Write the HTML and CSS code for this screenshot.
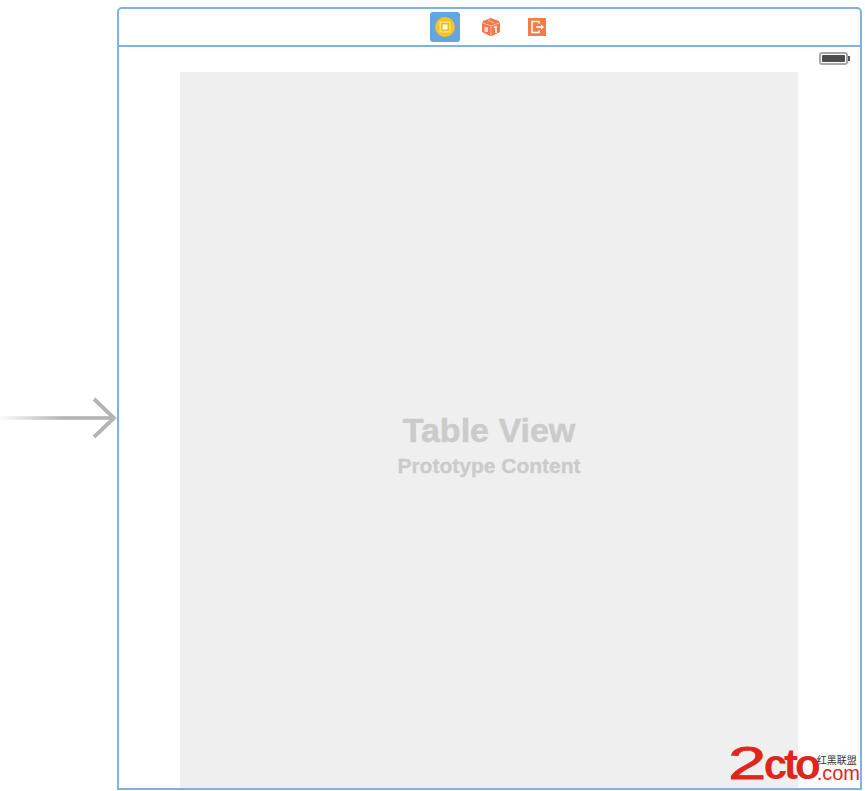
FILE: index.html
```html
<!DOCTYPE html>
<html lang="en">
<head>
    <meta charset="UTF-8">
    <title>Table View Controller Scene</title>
    <link rel="stylesheet" href="styles.css">
</head>
<body>
    <div class="canvas">
        <svg class="entry-arrow" width="117" height="50" viewBox="0 0 117 50">
            <defs>
                <linearGradient id="arrowFade" x1="0" y1="0" x2="1" y2="0">
                    <stop offset="0" stop-color="#b4b4b4" stop-opacity="0.05"/>
                    <stop offset="0.55" stop-color="#b4b4b4"/>
                    <stop offset="1" stop-color="#b4b4b4"/>
                </linearGradient>
            </defs>
            <rect x="0" y="23.2" width="114" height="3.6" fill="url(#arrowFade)"/>
            <path d="M94 6 L114 25 L94 44" fill="none" stroke="#b4b4b4" stroke-width="3.8"/>
        </svg>

        <div class="scene">
            <header class="scene-bar">
                <span class="bar-icon selected">
                    <svg width="22" height="22" viewBox="0 0 22 22">
                        <circle cx="11" cy="11" r="10" fill="#f8c31c"/>
                        <rect x="5.5" y="5.5" width="11" height="11" fill="#fbe08a"/>
                        <rect x="7" y="7" width="8" height="8" fill="#f6b90f"/>
                        <rect x="8.5" y="8.5" width="5" height="5" fill="#ffffff"/>
                    </svg>
                </span>
                <span class="bar-icon">
                    <svg width="20" height="20" viewBox="0 0 20 20">
                        <path d="M10 1 L18 4 L19 7 L19 15 L11 19 L9 19 L1 15 L1 7 L2 4 Z" fill="#f4774a"/>
                        <path d="M2 6 L10 9 L18 6 M10 9 L10 19" fill="none" stroke="#fbd5c5" stroke-width="0.8"/>
                        <path d="M7 3 L13 6" stroke="#fbd5c5" stroke-width="0.8"/>
                        <rect x="3.5" y="10" width="3.5" height="5" fill="#fbd5c5"/>
                        <path d="M13 10.5 L15 9.8 L15 16" fill="none" stroke="#ffffff" stroke-width="1.5"/>
                    </svg>
                </span>
                <span class="bar-icon">
                    <svg width="20" height="20" viewBox="0 0 20 20">
                        <rect x="1" y="1" width="18" height="18" fill="#f47c46"/>
                        <path d="M12 6.5 V4.5 H5 V15.5 H12 V13.5" fill="none" stroke="#ffffff" stroke-width="1.6"/>
                        <path d="M9 10 H14" stroke="#ffffff" stroke-width="1.6"/>
                        <path d="M14 7.5 L17 10 L14 12.5 Z" fill="#ffffff"/>
                    </svg>
                </span>
            </header>

            <div class="status-row">
                <span class="battery"><span class="battery-level"></span></span>
            </div>

            <main class="table-view">
                <h1>Table View</h1>
                <h2>Prototype Content</h2>
            </main>

            <div class="watermark">
                <span class="logo-two">2</span><span class="logo-cto">cto</span>
                <span class="logo-side">
                    <span class="logo-cn">红黑联盟</span>
                    <span class="logo-com">.com</span>
                </span>
            </div>
        </div>
    </div>
</body>
</html>
```

FILE: styles.css
```css
body {
    margin: 0;
    background: #ffffff;
    font-family: "Liberation Sans", Arial, sans-serif;
}

.canvas {
    display: flex;
    align-items: flex-start;
    width: 865px;
    height: 791px;
    overflow: hidden;
}

.entry-arrow {
    flex: none;
    margin-top: 393px;
}

.scene {
    position: relative;
    box-sizing: border-box;
    display: flex;
    flex-direction: column;
    width: 745px;
    height: 783px;
    margin-top: 7px;
    border: 2px solid #7fb1e3;
    border-radius: 5px 5px 0 0;
}

.scene-bar {
    flex: none;
    display: flex;
    justify-content: center;
    align-items: center;
    gap: 16px;
    height: 36px;
    padding-left: 2px;
    border-bottom: 2px solid #7fb1e3;
}

.bar-icon {
    display: flex;
    justify-content: center;
    align-items: center;
    width: 30px;
    height: 30px;
    border-radius: 3px;
}

.bar-icon.selected {
    background: #63a5e0;
}

.status-row {
    flex: none;
    display: flex;
    justify-content: flex-end;
    height: 25px;
    padding: 5px 12px 0 0;
    box-sizing: border-box;
}

.battery {
    position: relative;
    box-sizing: border-box;
    display: block;
    width: 29px;
    height: 13px;
    padding: 1px;
    border: 2px solid #a8a8a8;
    border-radius: 3px;
}

.battery::after {
    content: "";
    position: absolute;
    right: -4px;
    top: 2px;
    width: 2px;
    height: 5px;
    background: #555555;
}

.battery-level {
    display: block;
    height: 100%;
    background: #4d4d4d;
    border-radius: 1px;
}

.table-view {
    flex: 1;
    margin: 0 62px 0 61px;
    padding-top: 338px;
    background: #efefef;
    text-align: center;
    color: #cbcbcb;
}

.table-view h1 {
    margin: 0;
    font-size: 34px;
    line-height: 40px;
    font-weight: bold;
    -webkit-text-stroke: 0.5px #cbcbcb;
}

.table-view h2 {
    margin: 0;
    font-size: 21px;
    line-height: 32px;
    font-weight: bold;
    -webkit-text-stroke: 0.3px #cbcbcb;
}

.watermark {
    position: absolute;
    right: 0;
    bottom: 8px;
    display: flex;
    align-items: flex-end;
    color: #e0251c;
    line-height: 1;
}

.logo-two {
    display: inline-block;
    width: 36px;
    margin-bottom: -6px;
    font-size: 46px;
    -webkit-text-stroke: 0.8px #e0251c;
    transform: scaleX(1.5);
    transform-origin: left bottom;
}

.logo-cto {
    width: 53px;
    margin-bottom: -6px;
    font-size: 42px;
    font-weight: bold;
    letter-spacing: -3px;
}

.logo-side {
    display: flex;
    flex-direction: column;
    align-items: flex-start;
}

.logo-cn {
    font-family: "Noto Sans CJK SC", sans-serif;
    font-size: 10px;
    line-height: 12px;
    color: #333333;
}

.logo-com {
    font-size: 20px;
    line-height: 14px;
}
```
